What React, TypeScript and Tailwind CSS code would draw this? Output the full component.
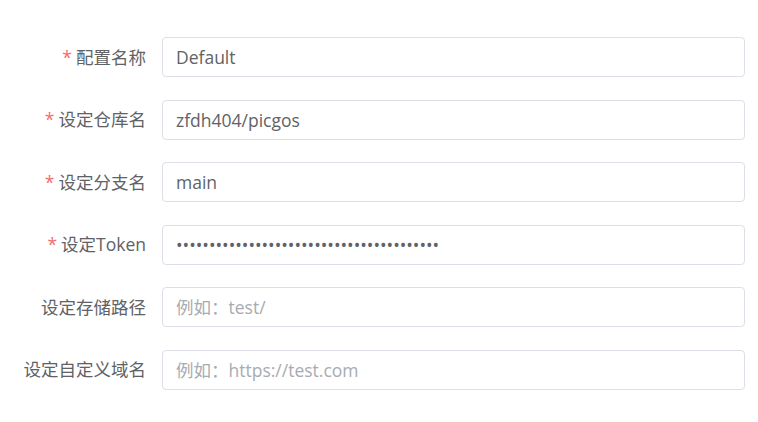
import React from "react";

type Field = {
  label: string;
  required?: boolean;
  value?: string;
  placeholder?: string;
  password?: boolean;
};

const fields: Field[] = [
  { label: "配置名称", required: true, value: "Default" },
  { label: "设定仓库名", required: true, value: "zfdh404/picgos" },
  { label: "设定分支名", required: true, value: "main" },
  { label: "设定Token", required: true, value: "ghp_x8K2mQ9vL4nR7tY1wZ3bC6dF0gH5jP2sA8eU", password: true },
  { label: "设定存储路径", placeholder: "例如：test/" },
  { label: "设定自定义域名", placeholder: "例如：https://test.com" },
];

const font = { fontFamily: '"Open Sans", "Noto Sans CJK SC", sans-serif' };

export default function App() {
  return (
    <div className="w-[758px] h-[422px] bg-white pt-[37px] pr-[13px]" style={font}>
      {fields.map((f) => (
        <div key={f.label} className="flex items-center h-10 mb-[22.5px]">
          <label className="w-[162px] shrink-0 pr-4 text-right text-[17.5px] text-[#606266]">
            {f.required && <span className="text-[#f56c6c] mr-1">*</span>}
            {f.label}
          </label>
          <input
            readOnly
            type={f.password ? "password" : "text"}
            defaultValue={f.value}
            placeholder={f.placeholder}
            className="flex-1 h-10 rounded border border-[#dcdfe6] px-[13px] text-[17.5px] text-[#606266] placeholder:text-[#a8abb2] outline-none"
            style={font}
          />
        </div>
      ))}
    </div>
  );
}
